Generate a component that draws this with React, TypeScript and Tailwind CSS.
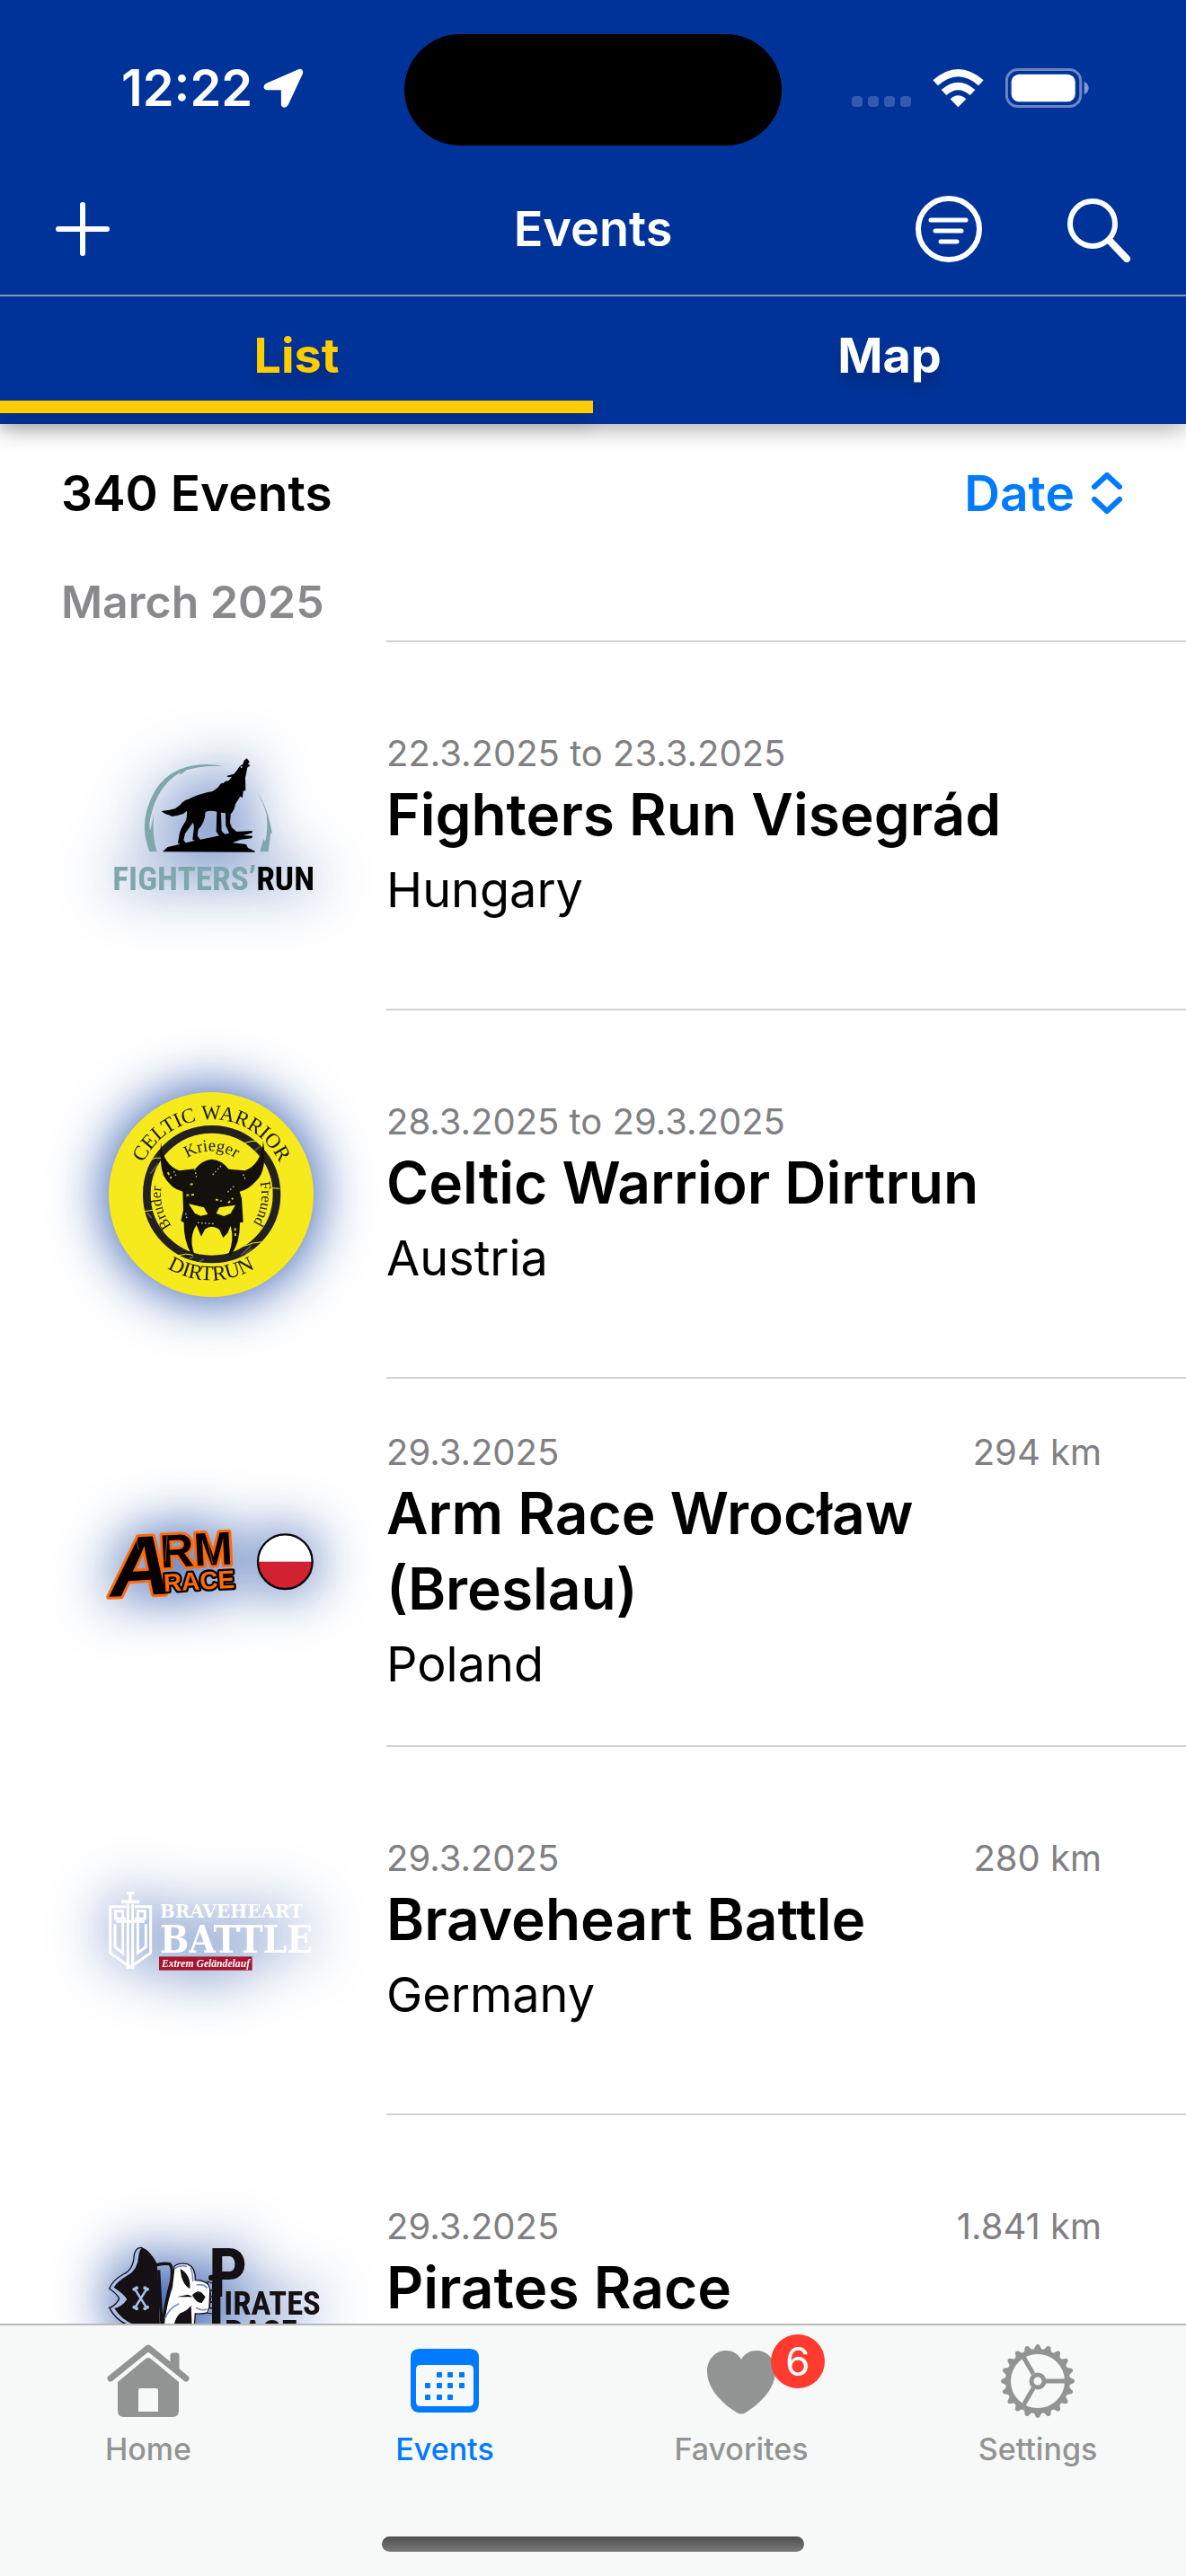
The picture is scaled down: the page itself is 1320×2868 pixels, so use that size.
import type { ReactNode } from "react";

const NARROW = "'Roboto Condensed', 'Liberation Sans Narrow', 'DejaVu Sans Condensed', sans-serif";

function FightersLogo() {
  return (
    <svg viewBox="123 127 684 460" className="w-full overflow-visible" role="img" aria-label="Fighters' Run logo">
      <g fill="#7ea7ab">
        <path d="M260 443 Q230 372 252 298 Q290 172 410 154 Q460 147 505 158 Q440 153 384 170 L360 186 L362 178 Q285 222 262 330 Q256 358 262 372 L274 318 Q266 385 284 443 Z" />
        <path d="M615 240 Q648 282 662 350 L669 382 L664 380 L656 443 L628 443 L640 400 L645 410 Q656 370 650 318 Q640 278 615 240 Z" />
      </g>
      <path
        fill="#000"
        d="M584 131 L575 138 L571 150 L560 158 L552 170 L541 183 L516 190 L524 194 L534 192 L524 206 L512 208 L506 214 L498 215 L486 230 L470 241 Q430 248 400 262 L388 268 Q372 272 362 286 L345 299 Q325 306 299 307 Q312 318 322 319 L334 325 L352 322 L372 316 L384 306 Q386 328 378 344 Q362 366 358 390 L354 414 L366 420 L382 415 L373 404 L378 382 L404 346 Q410 356 406 376 L403 402 L412 407 L429 403 L419 389 L422 368 Q444 348 446 310 Q462 303 484 309 L482 376 L494 392 L512 386 L500 374 L498 312 L513 314 L514 356 L526 382 L550 376 L534 362 L528 346 L530 318 Q544 302 546 284 L562 258 L570 262 L572 240 L580 238 L579 196 L586 162 L596 154 L588 150 L593 142 Z"
      />
      <path
        fill="#000"
        d="M303 443 L320 427 L350 420 L400 408 L480 392 L545 376 L602 373 L602 380 L572 388 L604 390 L600 398 L564 402 L536 413 L582 418 L588 430 L612 441 L610 444 Z"
      />
      <circle cx="566" cy="160" r="3" fill="#c9d4ea" />
      <text x="136" y="570" fontFamily={NARROW} fontWeight="700" fontSize="112">
        <tspan fill="#7ea7ab">FIGHTERS’</tspan>
        <tspan fill="#000">RUN</tspan>
      </text>
    </svg>
  );
}

function CelticLogo() {
  return (
    <svg viewBox="123 136 684 684" className="w-full overflow-visible" role="img" aria-label="Celtic Warrior Dirtrun logo">
      <defs>
        <path id="celtic-top" d="M215 478 A251 251 0 0 1 717 478" />
        <path id="celtic-bottom" d="M179 478 A286 286 0 0 0 751 478" />
        <path id="celtic-krieger" d="M320 478 A146 146 0 0 1 612 478" />
        <path id="celtic-bruder" d="M440 646 A170 170 0 0 1 400 322" />
        <path id="celtic-freund" d="M530 322 A170 170 0 0 1 492 646" />
      </defs>
      <circle cx="465" cy="478" r="342" fill="#f7ea1c" />
      <circle cx="467" cy="477" r="217" fill="none" stroke="#222120" strokeWidth="26" />
      <g stroke="#f7ea1c" strokeWidth="3" fill="none">
        <path d="M575 306 Q600 296 625 300 M262 362 Q280 352 300 356 M668 456 L694 458 M242 534 L270 530 M355 682 Q380 672 405 680 M576 650 Q606 636 636 636" />
      </g>
      <g stroke="#77766f" strokeWidth="5" fill="none" opacity=".7">
        <path d="M612 330 L628 318 M262 408 L290 374 M252 540 L266 556 M565 680 L598 648 M580 676 L600 660 M425 702 L440 694 M392 694 L406 684" />
      </g>
      <g fill="#1a1810" fontFamily="'Liberation Serif', serif" textAnchor="middle">
        <text fontSize="69"><textPath href="#celtic-top" startOffset="50%">CELTIC WARRIOR</textPath></text>
        <text fontSize="70"><textPath href="#celtic-bottom" startOffset="50%">DIRTRUN</textPath></text>
        <text fontSize="56"><textPath href="#celtic-krieger" startOffset="50%">Krieger</textPath></text>
        <text fontSize="50"><textPath href="#celtic-bruder" startOffset="45%">Bruder</textPath></text>
        <text fontSize="50"><textPath href="#celtic-freund" startOffset="52%">Freund</textPath></text>
      </g>
      <path
        fill="#14110c"
        d="M297 303 Q304 376 358 398 L412 392 Q436 362 467 360 Q500 362 524 393 L578 398 Q632 376 639 300 Q654 398 614 434 Q590 462 560 468 L567 490 L572 570 L561 572 Q562 640 530 682 L522 678 Q544 630 530 582 L520 606 L505 622 L492 594 Q466 576 444 594 L432 618 L416 580 Q388 622 410 680 L398 676 Q372 628 374 572 L364 566 L372 530 L370 468 Q330 458 306 414 Q292 376 297 303 Z"
      />
      <path fill="#f7ea1c" d="M390 509 L441 521 L454 544 L430 549 L411 541 Z M546 513 L492 521 L482 541 L508 550 L530 541 Z" />
      <path
        stroke="#bfbcb0"
        strokeWidth="4"
        strokeDasharray="5 7"
        fill="none"
        d="M470 412 L500 380 M420 572 L480 576 M410 392 L416 420 M520 470 L545 446 M572 410 L580 430 M340 400 L350 420 M380 540 L384 560"
      />
      <path
        stroke="#d8cd20"
        strokeWidth="6"
        strokeDasharray="9 8"
        fill="none"
        d="M382 480 L410 478 M480 494 L500 500 M395 444 L412 442 M522 506 L538 490 M545 590 L546 618 M320 404 L332 424"
      />
    </svg>
  );
}

function ArmRaceLogo() {
  return (
    <svg viewBox="123 178 684 250" className="w-full overflow-visible" role="img" aria-label="Arm Race logo">
      <g
        fontFamily="'Liberation Sans', sans-serif"
        fontWeight="700"
        strokeLinejoin="round"
        paintOrder="stroke"
        transform="rotate(-3 300 300)"
      >
        <g fill="#050201" stroke="#ff6a08" strokeWidth="18">
          <text x="124" y="408" fontSize="282" fontStyle="italic">A</text>
          <text x="296" y="320" fontSize="156">RM</text>
        </g>
        <text x="302" y="400" fontSize="84" fill="#ff6a08" stroke="#050201" strokeWidth="14">RACE</text>
      </g>
      <path stroke="#ff6a08" strokeWidth="2" fill="none" d="M214 212 L222 260 M408 204 L414 300 M448 210 L470 306 M318 214 L312 300" />
      <path d="M622 300 A90 90 0 0 1 802 300 Z" fill="#fff" />
      <path d="M622 300 A90 90 0 0 0 802 300 Z" fill="#d22232" />
      <circle cx="712" cy="300" r="91" fill="none" stroke="#06060a" strokeWidth="7" />
    </svg>
  );
}

function BraveheartLogo() {
  return (
    <svg viewBox="123 138 684 268" className="w-full overflow-visible" role="img" aria-label="Braveheart Battle logo">
      <g fill="none" stroke="#fff" strokeWidth="9">
        <path d="M180 191 H128 V346 L195 394 L263 346 V191 H210" />
        <path d="M180 232 H146 V206 H170 V346 L144 326 V250" />
        <path d="M210 232 H244 V206 H220 V346 L247 326 V250" />
        <path d="M148 241 H242" />
        <path d="M187 400 V182 M203 400 V182" />
        <path d="M165 175 H226" strokeWidth="11" />
        <path d="M195 148 V175" strokeWidth="11" />
        <path d="M183 146 H208" strokeWidth="10" />
      </g>
      <g fill="#fff" fontWeight="700">
        <text x="294" y="229" fontSize="60" fontFamily="'DejaVu Serif', serif">BRAVEHEART</text>
        <text x="294" y="345" fontSize="127" fontFamily="'DejaVu Serif Condensed', 'DejaVu Serif', serif">BATTLE</text>
      </g>
      <rect x="291" y="358" width="311" height="46" fill="#a5152f" />
      <text x="447" y="393" fontSize="35" textAnchor="middle" fill="#fff" fontWeight="700" fontStyle="italic" fontFamily="'Liberation Serif', serif">
        Extrem Geländelauf
      </text>
    </svg>
  );
}

function PiratesLogo() {
  return (
    <svg viewBox="123 183 684 354" className="w-full overflow-visible" role="img" aria-label="Pirates Race logo">
      <path
        d="M232 187 Q214 186 208 210 Q206 262 172 276 Q136 296 125 324 Q156 346 158 358 Q146 382 125 388 Q146 428 184 444 L200 520 H310 L300 440 L284 300 L280 240 Q262 200 232 187 Z"
        fill="#a9bfe8"
        stroke="#141013"
        strokeWidth="4"
      />
      <path
        d="M236 188 Q226 190 223 214 Q220 262 186 280 Q152 300 140 320 Q176 344 184 360 Q168 384 142 390 Q166 428 206 444 L220 520 H296 L290 330 L284 240 Q262 200 236 188 Z"
        fill="#141013"
      />
      <path d="M282 246 Q300 238 326 242 Q338 250 332 300 Q314 360 304 444 M290 262 L300 444" fill="none" stroke="#141013" strokeWidth="10" />
      <path
        d="M342 250 Q356 236 386 242 Q414 254 412 296 Q450 296 462 320 L458 404 Q430 410 412 408 L404 520 H300 Q308 390 334 320 Z"
        fill="#fff"
        stroke="#141013"
        strokeWidth="4"
      />
      <path d="M362 258 Q398 278 394 324 Q366 310 362 258 Z M402 346 Q420 326 434 338 L446 352 L434 372 Q414 372 402 346 Z M404 352 L350 352 L388 344 Z M398 380 Q400 430 404 520 H330 Q334 430 362 406 Q388 396 398 380 Z" fill="#141013" />
      <path d="M310 426 Q324 388 358 374 M396 254 Q404 270 404 300 M416 312 Q440 308 452 322 M414 388 Q436 400 450 392 M344 256 Q360 244 384 250" fill="none" stroke="#6f8fd6" strokeWidth="5" />
      <g fill="#8fa8dc" stroke="#141013" strokeWidth="3">
        <path d="M452 300 L474 308 L478 326 L462 330 Z M462 332 L480 328 L484 346 L464 350 Z M464 352 L484 348 L484 368 L464 368 Z M462 370 L482 370 L478 388 L460 388 Z M456 390 L476 390 L470 408 L452 406 Z" />
      </g>
      <path d="M212 328 L248 386 M248 328 L212 386" stroke="#a9bfe8" strokeWidth="8" />
      <g fill="#a9bfe8">
        <circle cx="208" cy="326" r="6" /><circle cx="216" cy="322" r="6" />
        <circle cx="244" cy="322" r="6" /><circle cx="252" cy="326" r="6" />
        <circle cx="208" cy="386" r="6" /><circle cx="216" cy="391" r="6" />
        <circle cx="244" cy="391" r="6" /><circle cx="252" cy="386" r="6" />
      </g>
      <rect x="468" y="300" width="28" height="236" fill="#141013" />
      <circle cx="466" cy="288" r="10" fill="#141013" />
      <g fill="#141013" fontFamily={NARROW} fontWeight="700">
        <text x="456" y="350" fontSize="228">P</text>
        <text x="508" y="411" fontSize="110">IRATES</text>
        <text x="510" y="506" fontSize="110">RACE</text>
      </g>
    </svg>
  );
}

type EventItem = {
  date: string;
  title: string;
  country: string;
  distance?: string;
  logo: ReactNode;
};

const events: EventItem[] = [
  { date: "22.3.2025 to 23.3.2025", title: "Fighters Run Visegrád", country: "Hungary", logo: <FightersLogo /> },
  { date: "28.3.2025 to 29.3.2025", title: "Celtic Warrior Dirtrun", country: "Austria", logo: <CelticLogo /> },
  { date: "29.3.2025", title: "Arm Race Wrocław (Breslau)", country: "Poland", distance: "294 km", logo: <ArmRaceLogo /> },
  { date: "29.3.2025", title: "Braveheart Battle", country: "Germany", distance: "280 km", logo: <BraveheartLogo /> },
  { date: "29.3.2025", title: "Pirates Race", country: "Germany", distance: "1.841 km", logo: <PiratesLogo /> },
];

function EventRow({ event }: { event: EventItem }) {
  return (
    <li className="flex h-[410px] shrink-0">
      <div className="flex w-[430px] shrink-0 items-center pt-1 pl-[121px]">
        <div className="w-[228px] [filter:drop-shadow(0_0_32px_#003399e6)]">{event.logo}</div>
      </div>
      <div className="flex flex-1 flex-col justify-center border-t-2 border-[#d2d2d4] pt-2 pr-[94px]">
        <div className="flex justify-between text-[40px] leading-[52px] text-[#808083]">
          <span>{event.date}</span>
          {event.distance && <span>{event.distance}</span>}
        </div>
        <h2 className="text-[64px] leading-[84px] font-semibold">{event.title}</h2>
        <p className="text-[54px] leading-[84px]">{event.country}</p>
      </div>
    </li>
  );
}

function StatusBar() {
  return (
    <div className="grid h-[182px] grid-cols-[1fr_420px_1fr] items-center pt-[18px]">
      <div className="flex items-center gap-3 pb-1 pl-[135px]">
        <span className="text-[56px] leading-[60px] font-semibold">12:22</span>
        <svg viewBox="762 80 136 134" className="h-[44px] w-[45px]" aria-hidden="true">
          <path
            d="M884 82 Q899 82 895 99 L846 204 Q840 214 832 213 Q822 211 822 202 V154 H774 Q764 153 763 143 Q763 136 772 131 Z"
            fill="#fff"
          />
        </svg>
      </div>
      <div className="h-[124px] rounded-full bg-black" />
      <div className="flex items-center justify-end gap-[24px] pr-[108px] pb-1">
        <svg viewBox="0 0 66 44" className="h-[44px] w-[66px]" aria-hidden="true" fill="#fff" fillOpacity=".2">
          <rect x="0" y="31" width="12" height="12" rx="4" />
          <rect x="18" y="31" width="12" height="12" rx="4" />
          <rect x="36" y="31" width="12" height="12" rx="4" />
          <rect x="54" y="31" width="12" height="12" rx="4" />
        </svg>
        <svg viewBox="350 78 171 132" className="h-[44px] w-[57px]" aria-label="Wi-Fi" fill="#fff">
          <path d="M351 118 Q435 44 520 118 L503 136 Q435 76 368 136 Z" />
          <path d="M379 150 Q435 100 492 150 L475 168 Q435 134 396 168 Z" />
          <path d="M409 181 Q435 156 462 181 L435 208 Z" />
        </svg>
        <svg viewBox="594 78 280 132" className="h-[44px] w-[93px]" aria-label="Battery">
          <rect x="598" y="82" width="248" height="124" rx="38" fill="none" stroke="#fff" strokeOpacity=".42" strokeWidth="9" />
          <rect x="614" y="98" width="214" height="92" rx="26" fill="#fff" />
          <path d="M858 122 Q873 130 873 144 Q873 158 858 166 Z" fill="#fff" fillOpacity=".5" />
        </svg>
      </div>
    </div>
  );
}

function NavigationBar() {
  return (
    <div className="grid h-[148px] grid-cols-3 items-center border-b-2 border-[#8c93b5] px-[61px]">
      <button type="button" aria-label="Add event" className="justify-self-start">
        <svg viewBox="0 0 62 62" className="size-[62px]" stroke="#fff" strokeWidth="6" strokeLinecap="round">
          <path d="M31 4 V58 M4 31 H58" />
        </svg>
      </button>
      <h1 className="text-center text-[54px] leading-[60px] font-semibold">Events</h1>
      <div className="flex items-center justify-end gap-[94px]">
        <button type="button" aria-label="Filter">
          <svg viewBox="0 0 74 74" className="size-[74px]" fill="none" stroke="#fff" strokeLinecap="round">
            <circle cx="37" cy="37" r="34" strokeWidth="6" />
            <path d="M17 27 H56 M22 39 H51 M28 51 H46" strokeWidth="5" />
          </svg>
        </button>
        <button type="button" aria-label="Search">
          <svg viewBox="0 0 72 74" className="h-[74px] w-[72px]" fill="none" stroke="#fff" strokeLinecap="round">
            <circle cx="29" cy="31" r="25" strokeWidth="6" />
            <path d="M48 50 L67 70" strokeWidth="8" />
          </svg>
        </button>
      </div>
    </div>
  );
}

function ViewTab({ label, active }: { label: string; active: boolean }) {
  return (
    <button type="button" role="tab" aria-selected={active} className="flex h-[142px] flex-1 flex-col pb-3">
      <span
        className={
          active
            ? "flex flex-1 items-center justify-center pt-4 text-[54px] leading-[60px] font-bold text-[#ffcc00] [text-shadow:0_12px_16px_#00000030]"
            : "flex flex-1 items-center justify-center pt-4 text-[54px] leading-[60px] font-bold text-white [text-shadow:0_12px_16px_#00000030]"
        }
      >
        {label}
      </span>
      <span className={active ? "h-[14px] w-full bg-[#ffcc00] shadow-[0_12px_20px_#00000030]" : "h-[14px] w-full"} />
    </button>
  );
}

function HomeIcon() {
  return (
    <svg viewBox="0 0 92 84" className="h-[84px] w-[92px]" aria-hidden="true">
      <path d="M4 39 L46 5 L88 39" fill="none" stroke="#929493" strokeWidth="7" strokeLinecap="round" strokeLinejoin="round" />
      <path d="M71 26 V13 Q71 11 73 11 H78 Q80 11 80 13 V34 Z" fill="#929493" stroke="#929493" />
      <path
        fillRule="evenodd"
        fill="#929493"
        d="M46 16 Q48 16 50 18 L80 43 V75 Q80 82 73 82 H19 Q12 82 12 75 V43 L42 18 Q44 16 46 16 Z M37 50 Q35 50 35 52 V76 H57 V52 Q57 50 55 50 Z"
      />
    </svg>
  );
}

function CalendarIcon() {
  return (
    <svg viewBox="0 0 78 84" className="h-[84px] w-[78px]" aria-hidden="true" fill="#007aff">
      <path
        fillRule="evenodd"
        d="M11 6 H67 Q77 6 77 16 V66 Q77 77 67 77 H11 Q1 77 1 66 V16 Q1 6 11 6 Z M12 24 Q7 24 7 29 V65 Q7 70 12 70 H66 Q71 70 71 65 V29 Q71 24 66 24 Z"
      />
      {[[30, 32], [42, 32], [55, 32], [17, 44], [30, 44], [42, 44], [55, 44], [17, 57], [30, 57], [42, 57]].map(([x, y]) => (
        <rect key={`${x}-${y}`} x={x} y={y} width="6" height="6" rx="1" />
      ))}
    </svg>
  );
}

function HeartIcon() {
  return (
    <svg viewBox="0 0 84 84" className="size-[84px]" aria-hidden="true">
      <path
        fill="#929493"
        d="M42 18 C46 11 52 8 59 8 C71 8 80 18 80 31 C80 49 65 66 47 77 Q42 80 37 77 C19 66 4 49 4 31 C4 18 13 8 25 8 C32 8 38 11 42 18 Z"
      />
    </svg>
  );
}

function GearIcon() {
  const teeth = Array.from({ length: 20 }, (_, i) => i * 18);
  return (
    <svg viewBox="-42 -42 84 84" className="size-[84px]" aria-hidden="true">
      <g fill="#929493">
        {teeth.map((angle) => (
          <path key={angle} d="M34 -5 L40 -2 Q42 0 40 2 L34 5 Z" transform={`rotate(${angle})`} />
        ))}
      </g>
      <g fill="none" stroke="#929493">
        <circle r="33" strokeWidth="6" />
        <circle r="7" strokeWidth="5" />
        <path d="M9 0 H32 M-5 -8 L-16 -27 M-5 8 L-16 27" strokeWidth="5" />
      </g>
    </svg>
  );
}

function TabItem({ label, icon, badge, active }: { label: string; icon: ReactNode; badge?: string; active?: boolean }) {
  return (
    <a href={`#${label.toLowerCase()}`} aria-current={active ? "page" : undefined} className="flex flex-1 flex-col items-center gap-[14px] pt-5">
      <span className="relative">
        {icon}
        {badge && (
          <span className="absolute -top-[10px] left-[75px] flex size-[60px] items-center justify-center rounded-full bg-[#ff3b30] text-[44px] text-white">
            {badge}
          </span>
        )}
      </span>
      <span
        className={
          active
            ? "text-[34px] leading-[40px] font-medium text-[#007aff]"
            : "text-[34px] leading-[40px] font-medium text-[#929493]"
        }
      >
        {label}
      </span>
    </a>
  );
}

export default function App() {
  return (
    <div className="flex h-screen flex-col bg-white font-['Inter',sans-serif] text-black">
      <header className="z-10 shrink-0 bg-[#003399] text-white shadow-[0_6px_24px_#00000050]">
        <StatusBar />
        <NavigationBar />
        <div role="tablist" className="flex">
          <ViewTab label="List" active />
          <ViewTab label="Map" active={false} />
        </div>
      </header>

      <main className="flex min-h-0 flex-1 flex-col overflow-hidden">
        <div className="flex h-[150px] shrink-0 items-center justify-between px-[68px] pt-1 text-[55px] leading-[60px] font-semibold">
          <span>340 Events</span>
          <button type="button" className="flex items-center gap-4 text-[#007aff]">
            Date
            <svg viewBox="0 0 40 50" className="h-[50px] w-[40px]" fill="none" stroke="#007aff" strokeWidth="6" strokeLinecap="round" strokeLinejoin="round" aria-hidden="true">
              <path d="M6 18 L20 5 L34 18 M6 32 L20 45 L34 32" />
            </svg>
          </button>
        </div>
        <h3 className="flex h-[91px] shrink-0 items-center px-[68px] pt-1 text-[50px] leading-[60px] font-semibold text-[#8a8a8e]">
          March 2025
        </h3>
        <ul className="flex flex-col">
          {events.map((event) => (
            <EventRow key={event.title} event={event} />
          ))}
        </ul>
      </main>

      <nav className="z-10 flex h-[281px] shrink-0 flex-col border-t-2 border-[#b9babb] bg-[#f7f8f8]">
        <div className="flex flex-1">
          <TabItem label="Home" icon={<HomeIcon />} />
          <TabItem label="Events" icon={<CalendarIcon />} active />
          <TabItem label="Favorites" icon={<HeartIcon />} badge="6" />
          <TabItem label="Settings" icon={<GearIcon />} />
        </div>
        <div className="mb-[27px] h-[17px] w-[470px] self-center rounded-full bg-linear-to-b from-[#4f4f4f] to-[#797979]" />
      </nav>
    </div>
  );
}
